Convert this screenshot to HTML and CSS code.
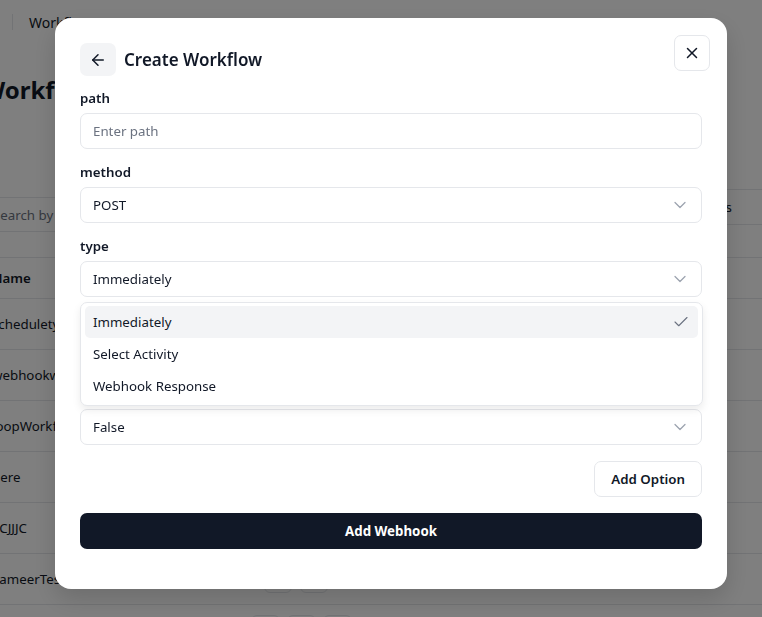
FILE: index.html
```html
<!DOCTYPE html>
<html lang="en">
<head>
  <meta charset="UTF-8">
  <meta name="viewport" content="width=device-width, initial-scale=1.0">
  <title>Workflows</title>
  <link rel="stylesheet" href="styles.css">
</head>
<body>

<div class="page">
  <header class="topbar">
    <span class="sep"></span>
    <span class="crumb">Workflows</span>
  </header>

  <main class="content">
    <h1>Workflows</h1>
    <div class="toolbar">
      <div class="search">Search by name</div>
      <div class="status">Status</div>
    </div>

    <table class="list">
      <thead>
        <tr><th>Name</th><th></th></tr>
      </thead>
      <tbody>
        <tr><td>scheduletypeflow</td><td><span class="act"></span><span class="act"></span></td></tr>
        <tr><td>webhookworkflow</td><td><span class="act"></span><span class="act"></span></td></tr>
        <tr><td>loopWorkflow</td><td><span class="act"></span><span class="act"></span></td></tr>
        <tr><td>here</td><td><span class="act"></span><span class="act"></span></td></tr>
        <tr><td>JJCJJJC</td><td><span class="act"></span><span class="act"></span></td></tr>
        <tr><td>SameerTest</td><td><span class="act"></span><span class="act"></span></td></tr>
      </tbody>
    </table>

    <div class="pager">
      <span class="pg"></span><span class="pg"></span><span class="pg"></span>
    </div>
  </main>
</div>

<div class="overlay"></div>

<div class="modal">
  <button class="close" type="button">
    <svg width="18" height="18" viewBox="0 0 24 24" fill="none" stroke="currentColor" stroke-width="2" stroke-linecap="round" stroke-linejoin="round"><path d="M18 6 6 18"/><path d="m6 6 12 12"/></svg>
  </button>

  <div class="modal-head">
    <button class="back" type="button">
      <svg width="18" height="18" viewBox="0 0 24 24" fill="none" stroke="currentColor" stroke-width="2" stroke-linecap="round" stroke-linejoin="round"><path d="m12 19-7-7 7-7"/><path d="M19 12H5"/></svg>
    </button>
    <h2>Create Workflow</h2>
  </div>

  <form class="form">
    <div class="field">
      <label>path</label>
      <div class="input placeholder">Enter path</div>
    </div>

    <div class="field">
      <label>method</label>
      <div class="input select">
        <span>POST</span>
        <svg class="chev" width="20" height="20" viewBox="0 0 24 24" fill="none" stroke="currentColor" stroke-width="1.5" stroke-linecap="round" stroke-linejoin="round"><path d="m6 9 6 6 6-6"/></svg>
      </div>
    </div>

    <div class="field drop-anchor">
      <label>type</label>
      <div class="input select">
        <span>Immediately</span>
        <svg class="chev" width="20" height="20" viewBox="0 0 24 24" fill="none" stroke="currentColor" stroke-width="1.5" stroke-linecap="round" stroke-linejoin="round"><path d="m6 9 6 6 6-6"/></svg>
      </div>

      <div class="menu">
        <div class="item active">
          <span>Immediately</span>
          <svg width="18" height="18" viewBox="0 0 24 24" fill="none" stroke="currentColor" stroke-width="1.5" stroke-linecap="round" stroke-linejoin="round"><path d="M20 6 9 17l-5-5"/></svg>
        </div>
        <div class="item">Select Activity</div>
        <div class="item">Webhook Response</div>
      </div>
    </div>

    <div class="field">
      <label>activity</label>
      <div class="input select">
        <span>Select</span>
      </div>
    </div>

    <div class="field">
      <label>response</label>
      <div class="input select">
        <span>False</span>
        <svg class="chev" width="20" height="20" viewBox="0 0 24 24" fill="none" stroke="currentColor" stroke-width="1.5" stroke-linecap="round" stroke-linejoin="round"><path d="m6 9 6 6 6-6"/></svg>
      </div>
    </div>

    <div class="option-row">
      <button class="btn-outline" type="button">Add Option</button>
    </div>

    <button class="btn-primary" type="submit">Add Webhook</button>
  </form>
</div>

</body>
</html>
```

FILE: styles.css
```css
/* background page */
body {
  margin: 0;
  font-family: "Noto Sans", "Open Sans", sans-serif;
  font-size: 13.3px;
  color: #111827;
  background: #fff;
  overflow: hidden;
  height: 617px;
}
.page {
  width: 800px;
}
.topbar {
  display: flex;
  align-items: center;
  gap: 16px;
  height: 44px;
  padding-left: 12px;
}
.sep {
  width: 1px;
  height: 16px;
  background: #e5e7eb;
}
.crumb {
  font-size: 14px;
}
.content {
  margin-left: -24px;
  padding: 0 16px;
}
h1 {
  margin: 30px 0 0 -10px;
  font-size: 24px;
  font-weight: 700;
  line-height: 32px;
}
.toolbar {
  display: flex;
  justify-content: space-between;
  align-items: flex-start;
  margin-top: 83px;
  height: 68px;
}
.search {
  margin-top: 8px;
  margin-left: -12px;
  width: 400px;
  height: 35px;
  padding: 0 12px;
  line-height: 35px;
  color: #6b7280;
  border: 1px solid #e5e7eb;
  box-sizing: border-box;
}
.status {
  width: 120px;
  height: 36px;
  padding: 0 12px;
  line-height: 34px;
  border: 1px solid #e5e7eb;
  box-sizing: border-box;
  margin-right: -16px;
}
.list {
  width: 800px;
  margin-left: -16px;
  border-collapse: collapse;
}
.list th,
.list td {
  text-align: left;
  padding: 0 16px;
  border-bottom: 1px solid #e5e7eb;
}
.list thead tr {
  border-top: 1px solid #e5e7eb;
}
.list th {
  height: 40px;
  font-weight: 600;
}
.list td {
  height: 50px;
}
.list td:first-child {
  width: 240px;
}
.act {
  display: inline-block;
  width: 26px;
  height: 26px;
  margin-right: 8px;
  border: 1px solid #e5e7eb;
  border-radius: 6px;
  vertical-align: middle;
}
.pager {
  display: flex;
  gap: 7px;
  padding: 10px 0 0 259px;
}
.pg {
  width: 27px;
  height: 27px;
  border: 1px solid #e5e7eb;
  border-radius: 6px;
}

.overlay {
  position: fixed;
  inset: 0;
  background: rgba(0, 0, 0, 0.5);
}

/* dialog */
.modal {
  position: fixed;
  top: 18px;
  left: 55px;
  width: 672px;
  box-sizing: border-box;
  padding: 25px 25px 40px;
  background: #fff;
  border-radius: 16px;
  box-shadow: 0 10px 25px rgba(0, 0, 0, 0.15);
}
.close {
  position: absolute;
  top: 17px;
  right: 17px;
  width: 36px;
  height: 36px;
  display: flex;
  align-items: center;
  justify-content: center;
  padding: 0;
  background: #fff;
  border: 1px solid #e5e7eb;
  border-radius: 7px;
  color: #111827;
}
.modal-head {
  display: flex;
  align-items: center;
  gap: 8px;
  margin-bottom: 12px;
}
.back {
  width: 36px;
  height: 33px;
  display: flex;
  align-items: center;
  justify-content: center;
  padding: 0;
  background: #f3f4f6;
  border: none;
  border-radius: 7px;
  color: #111827;
}
.modal-head h2 {
  margin: 0;
  font-size: 17px;
  font-weight: 600;
  line-height: 24px;
}
.form {
  display: flex;
  flex-direction: column;
}
.field {
  display: flex;
  flex-direction: column;
  gap: 5px;
  margin-bottom: 13px;
}
.field label {
  font-weight: 600;
  line-height: 20px;
}
.input {
  height: 36px;
  box-sizing: border-box;
  padding: 0 11px 0 12px;
  border: 1px solid #e5e7eb;
  border-radius: 7px;
  display: flex;
  align-items: center;
}
.placeholder {
  color: #6b7280;
}
.select {
  justify-content: space-between;
}
.chev {
  color: #9ca3af;
}
.drop-anchor {
  position: relative;
}
.menu {
  position: absolute;
  top: calc(100% + 5px);
  left: 0;
  right: -1px;
  padding: 3px 4px;
  background: #fff;
  border: 1px solid #e5e7eb;
  border-radius: 7px;
  box-shadow: 0 4px 8px rgba(0, 0, 0, 0.08);
  z-index: 2;
}
.item {
  height: 32px;
  display: flex;
  align-items: center;
  justify-content: space-between;
  padding: 0 8px;
  border-radius: 5px;
}
.item.active {
  background: #f3f4f6;
}
.item svg {
  color: #6b7280;
}
.option-row {
  display: flex;
  justify-content: flex-end;
  margin-top: 3px;
  margin-bottom: 16px;
}
.btn-outline {
  height: 36px;
  padding: 0 16px;
  font: inherit;
  font-weight: 600;
  color: #111827;
  background: #fff;
  border: 1px solid #e5e7eb;
  border-radius: 7px;
}
.btn-primary {
  height: 36px;
  font: inherit;
  font-weight: 700;
  color: #fff;
  background: #111827;
  border: none;
  border-radius: 7px;
}
```
